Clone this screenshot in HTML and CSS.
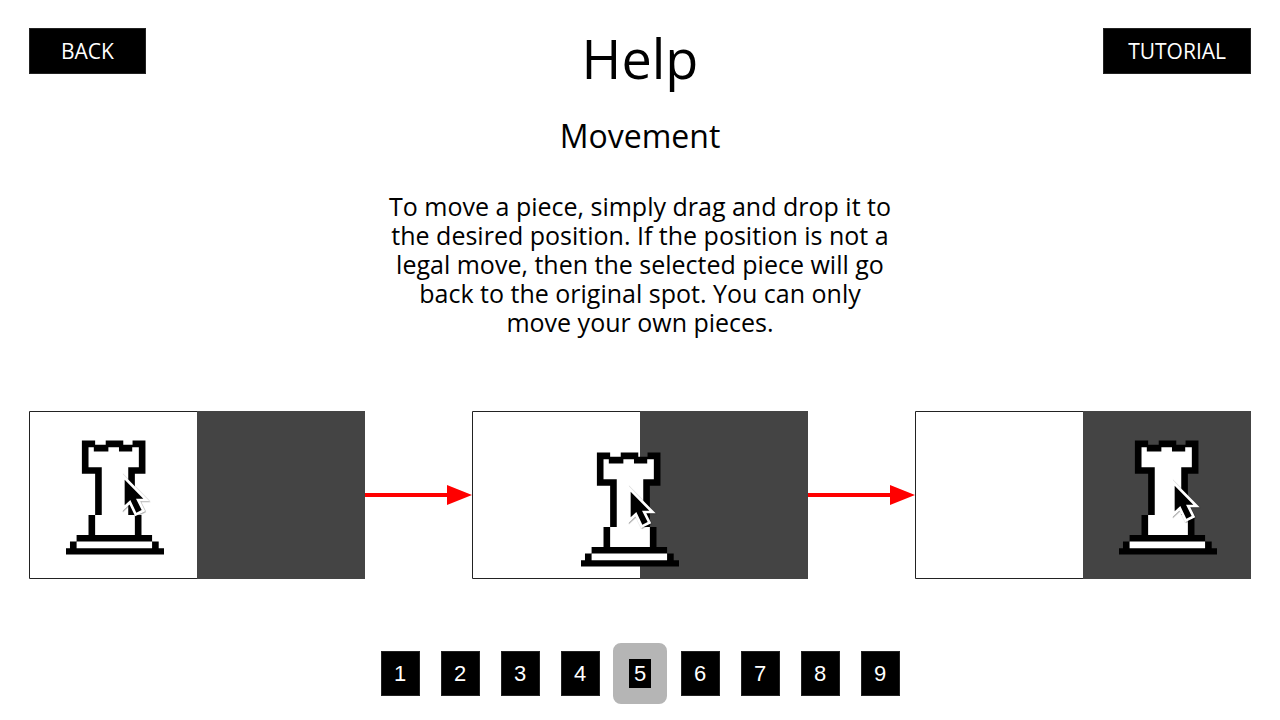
FILE: index.html
```html
<!DOCTYPE html>
<html lang="en">
<head>
<meta charset="utf-8">
<title>Help</title>
<link rel="stylesheet" href="styles.css">
</head>
<body>
<svg class="defs" aria-hidden="true">
  <defs>
    <symbol id="rook" viewBox="0 0 296 344">
      <path d="M48 0H88V13H120V0H173V13H201V0H240V100H208V225H228V285H260V305H280V325H296V344H0V325H12V305H32V285H68V225H88V100H48Z"/>
      <path fill="#fff" d="M68 20H84V33H128V20H160V33H200V20H220V81H188V225H208V285H88V225H108V81H68ZM32 305H260V325H32Z"/>
    </symbol>
    <symbol id="cursor" viewBox="0 0 120 150">
      <path class="cursor-shape" d="M29 29V106L46 90L64 128L80 120L63 86H85Z"/>
    </symbol>
  </defs>
</svg>
<header class="header">
  <button class="btn" type="button">BACK</button>
  <h1 class="title">Help</h1>
  <button class="btn btn-end" type="button">TUTORIAL</button>
</header>
<main class="main">
  <h2 class="subtitle">Movement</h2>
  <p class="text">To move a piece, simply drag and drop it to the desired position. If the position is not a legal move, then the selected piece will go back to the original spot. You can only move your own pieces.</p>
  <div class="steps">
    <svg class="board" viewBox="0 0 336 168" role="img" aria-label="Rook picked up">
      <path class="light" d="M.5.5H168.500V167.500H.5Z"/><path fill="#444" d="M168 0H336V168H168Z"/>
      <use href="#rook" x="37" y="29" width="98" height="115"/>
      <use href="#cursor" x="86" y="59" width="40" height="50"/>
    </svg>
    <svg class="arrow" viewBox="0 0 107 168" aria-hidden="true"><path fill="red" d="M0 82H82V74L107 84L82 94V86H0Z"/></svg>
    <svg class="board" viewBox="0 0 336 168" role="img" aria-label="Rook dragged">
      <path class="light" d="M.5.5H168.500V167.500H.5Z"/><path fill="#444" d="M168 0H336V168H168Z"/>
      <use href="#rook" x="109" y="41" width="98" height="115"/>
      <use href="#cursor" x="149" y="71" width="40" height="50"/>
    </svg>
    <svg class="arrow" viewBox="0 0 107 168" aria-hidden="true"><path fill="red" d="M0 82H82V74L107 84L82 94V86H0Z"/></svg>
    <svg class="board" viewBox="0 0 336 168" role="img" aria-label="Rook dropped">
      <path class="light" d="M.5.5H168.500V167.500H.5Z"/><path fill="#444" d="M168 0H336V168H168Z"/>
      <use href="#rook" x="204" y="29" width="98" height="115"/>
      <use href="#cursor" x="250" y="65" width="40" height="50"/>
    </svg>
  </div>
</main>
<nav class="pages" aria-label="Help pages">
  <button class="page" type="button">1</button>
  <button class="page" type="button">2</button>
  <button class="page" type="button">3</button>
  <button class="page" type="button">4</button>
  <button class="page page-current" type="button" aria-current="page">5</button>
  <button class="page" type="button">6</button>
  <button class="page" type="button">7</button>
  <button class="page" type="button">8</button>
  <button class="page" type="button">9</button>
</nav>
</body>
</html>
```
FILE: styles.css
```css
* { box-sizing: border-box; }
body {
  margin: 0;
  min-height: 100vh;
  padding: 28px 29px 16px;
  display: flex;
  flex-direction: column;
  background: #fff;
  color: #000;
  font-family: "Open Sans", sans-serif;
}
.defs { position: absolute; width: 0; height: 0; }
.cursor-shape {
  fill: #000;
  stroke: #fff;
  stroke-width: 16px;
  paint-order: stroke;
  filter: drop-shadow(2px 2px 2px rgba(0, 0, 0, 0.4));
}
.light { fill: #fff; stroke: #222; }
.header {
  display: grid;
  grid-template-columns: 1fr auto 1fr;
  align-items: start;
}
.btn {
  justify-self: start;
  padding: 7px 31px;
  border: 1px solid #222;
  background: #000;
  color: #fff;
  font: 21px/30px "Open Sans", sans-serif;
}
.btn-end { justify-self: end; padding: 7px 24px; }
.title { margin: 0; font-size: 54px; font-weight: 400; line-height: 60px; }
.main { display: flex; flex-direction: column; align-items: center; }
.subtitle { margin: 28px 0 0; font-size: 32px; font-weight: 400; line-height: 40px; }
.text {
  margin: 36px 0 0;
  max-width: 510px;
  font-size: 25px;
  line-height: 29px;
  text-align: center;
}
.steps { display: flex; width: 100%; margin-top: 74px; }
.board { flex: 336; min-width: 0; }
.arrow { flex: 107; min-width: 0; }
.pages {
  display: grid;
  grid-template-columns: repeat(9, 60px);
  justify-content: center;
  place-items: center;
  margin-top: auto;
}
.page {
  width: 39px;
  padding: 7px 0;
  border: 1px solid #222;
  background: #000;
  color: #fff;
  font: 22px/29px "Liberation Sans", sans-serif;
}
.page-current {
  width: 54px;
  padding: 0;
  border: 16px solid #b5b5b5;
  border-radius: 8px;
}
```
